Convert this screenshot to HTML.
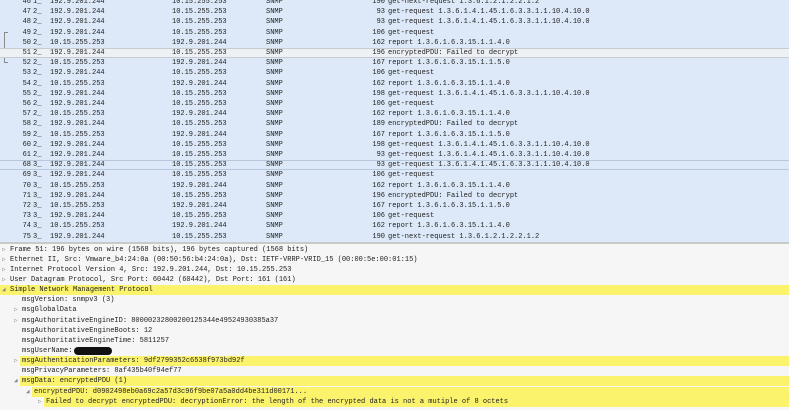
<!DOCTYPE html>
<html><head><style>
*{margin:0;padding:0;box-sizing:border-box}
body{width:789px;height:410px;overflow:hidden;background:#f7f7f7;font-family:"Liberation Mono",monospace;font-size:7px;color:#222;position:relative}
#list{position:absolute;left:0;top:0;width:789px;height:242px;background:#dde9f8;overflow:hidden}
.r{position:absolute;left:0;width:789px;height:10.2px;line-height:10.2px;white-space:pre}
.r span{position:absolute;top:0}
.sel{background:#eef1f4;border-top:1px solid #c8ccd2;border-bottom:1px solid #c8ccd2;line-height:8.2px}
.box{border-top:1px solid #b8c8dc;border-bottom:1px solid #b8c8dc;line-height:8.2px}
#sep{position:absolute;left:0;top:242px;width:789px;height:2px;background:#c9c9c9}
#det{position:absolute;left:0;top:244px;width:789px;height:166px;background:#f6f6f6}
.d{position:absolute;height:10px;line-height:10px;white-space:pre;left:0;width:789px}
.y{background:#fbf36c}
.a{position:absolute;color:#888;font-size:6px}
</style></head><body>
<div id="list">
<div style="position:absolute;left:4px;top:32px;width:4px;height:31px;border:1px solid #8a8a8a;border-right:none"></div>
</div>
<div id="sep"></div>
<div id="det"></div>
<script>
var rows=[
["46","192.9.201.244","10.15.255.253","190","get-next-request 1.3.6.1.2.1.2.2.1.2"],
["47","192.9.201.244","10.15.255.253","93","get-request 1.3.6.1.4.1.45.1.6.3.3.1.1.10.4.10.0"],
["48","192.9.201.244","10.15.255.253","93","get-request 1.3.6.1.4.1.45.1.6.3.3.1.1.10.4.10.0"],
["49","192.9.201.244","10.15.255.253","106","get-request"],
["50","10.15.255.253","192.9.201.244","162","report 1.3.6.1.6.3.15.1.1.4.0"],
["51","192.9.201.244","10.15.255.253","196","encryptedPDU: Failed to decrypt"],
["52","10.15.255.253","192.9.201.244","167","report 1.3.6.1.6.3.15.1.1.5.0"],
["53","192.9.201.244","10.15.255.253","106","get-request"],
["54","10.15.255.253","192.9.201.244","162","report 1.3.6.1.6.3.15.1.1.4.0"],
["55","192.9.201.244","10.15.255.253","198","get-request 1.3.6.1.4.1.45.1.6.3.3.1.1.10.4.10.0"],
["56","192.9.201.244","10.15.255.253","106","get-request"],
["57","10.15.255.253","192.9.201.244","162","report 1.3.6.1.6.3.15.1.1.4.0"],
["58","192.9.201.244","10.15.255.253","189","encryptedPDU: Failed to decrypt"],
["59","10.15.255.253","192.9.201.244","167","report 1.3.6.1.6.3.15.1.1.5.0"],
["60","192.9.201.244","10.15.255.253","198","get-request 1.3.6.1.4.1.45.1.6.3.3.1.1.10.4.10.0"],
["61","192.9.201.244","10.15.255.253","93","get-request 1.3.6.1.4.1.45.1.6.3.3.1.1.10.4.10.0"],
["68","192.9.201.244","10.15.255.253","93","get-request 1.3.6.1.4.1.45.1.6.3.3.1.1.10.4.10.0"],
["69","192.9.201.244","10.15.255.253","106","get-request"],
["70","10.15.255.253","192.9.201.244","162","report 1.3.6.1.6.3.15.1.1.4.0"],
["71","192.9.201.244","10.15.255.253","196","encryptedPDU: Failed to decrypt"],
["72","10.15.255.253","192.9.201.244","167","report 1.3.6.1.6.3.15.1.1.5.0"],
["73","192.9.201.244","10.15.255.253","106","get-request"],
["74","10.15.255.253","192.9.201.244","162","report 1.3.6.1.6.3.15.1.1.4.0"],
["75","192.9.201.244","10.15.255.253","190","get-next-request 1.3.6.1.2.1.2.2.1.2"]];
var L=document.getElementById('list'),h='';
rows.forEach(function(r,i){
 var top=-3+i*10.2;
 h+='<div class="r'+(i==5?' sel':'')+(i==16?' box':'')+'" style="top:'+top+'px"><span style="right:758px">'+r[0]+'</span><span style="left:33px">'+(i==0?'1_':(i>=16?'3_':'2_'))+'</span><span style="left:50px">'+r[1]+'</span><span style="left:172px">'+r[2]+'</span><span style="left:266px">SNMP</span><span style="right:404px">'+r[3]+'</span><span style="left:388px">'+r[4]+'</span></div>';
});
L.innerHTML+=h;
var d=[
[0,"Frame 51: 196 bytes on wire (1568 bits), 196 bytes captured (1568 bits)","&#9655;",0],
[0,"Ethernet II, Src: Vmware_b4:24:0a (00:50:56:b4:24:0a), Dst: IETF-VRRP-VRID_15 (00:00:5e:00:01:15)","&#9655;",0],
[0,"Internet Protocol Version 4, Src: 192.9.201.244, Dst: 10.15.255.253","&#9655;",0],
[0,"User Datagram Protocol, Src Port: 60442 (60442), Dst Port: 161 (161)","&#9655;",0],
[0,"Simple Network Management Protocol","&#9698;",1],
[12,"msgVersion: snmpv3 (3)","",0],
[12,"msgGlobalData","&#9655;",0],
[12,"msgAuthoritativeEngineID: 80000232800200125344e49524930385a37","&#9655;",0],
[12,"msgAuthoritativeEngineBoots: 12","",0],
[12,"msgAuthoritativeEngineTime: 5811257","",0],
[12,"msgUserName:","",0],
[12,"msgAuthenticationParameters: 9df2799352c6538f973bd92f","&#9655;",2],
[12,"msgPrivacyParameters: 8af435b40f94ef77","",0],
[12,"msgData: encryptedPDU (1)","&#9698;",2],
[24,"encryptedPDU: d0902498eb0a69c2a57d3c96f9be07a5a0dd4be311d00171...","&#9698;",2],
[36,"Failed to decrypt encryptedPDU: decryptionError: the length of the encrypted data is not a mutiple of 8 octets","&#9655;",2]];
var D=document.getElementById('det'),g='';
d.forEach(function(r,i){
 var top=0.5+i*10.15, x=r[0]+10;
 var st='top:'+top+'px;';
 var inner='<span class="a" style="left:'+(x-8)+'px">'+r[2]+'</span><span style="position:absolute;left:'+x+'px">'+r[1]+'</span>';
 if(r[3]==1) g+='<div class="d y" style="'+st+'">'+inner+'</div>';
 else if(r[3]==2) g+='<div class="d" style="'+st+'"><div class="y" style="position:absolute;left:'+(x-2)+'px;right:0;top:0;height:10px"></div>'+inner+'</div>';
 else g+='<div class="d" style="'+st+'">'+inner+'</div>';
});
g+='<div style="position:absolute;left:74px;top:103px;width:38px;height:8px;background:#111;border-radius:4px"></div>';
D.innerHTML=g;
</script>
</body></html>
